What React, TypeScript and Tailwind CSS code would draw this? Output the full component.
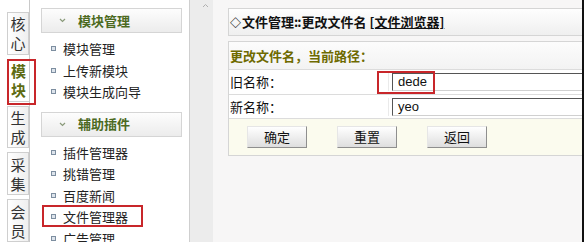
const font = { fontFamily: '"Noto Sans CJK SC", "Noto Sans", sans-serif' };

const tabs = [
  { label: '核心', active: false },
  { label: '模块', active: true },
  { label: '生成', active: false },
  { label: '采集', active: false },
  { label: '会员', active: false },
];

const groups = [
  { title: '模块管理', items: ['模块管理', '上传新模块', '模块生成向导'] },
  { title: '辅助插件', items: ['插件管理器', '挑错管理', '百度新闻', '文件管理器', '广告管理'] },
];

function Tab({ label, active }: { label: string; active: boolean }) {
  return (
    <div
      className={`relative flex h-[43px] w-[22px] flex-col items-center justify-center border border-[#cfcfcf] text-[15px] leading-[19px] ${
        active
          ? 'border-r-0 bg-white font-bold text-[#5d6b12]'
          : 'bg-gradient-to-r from-white to-[#efefef] text-[#333]'
      }`}
    >
      {label.split('').map((c) => (
        <span key={c}>{c}</span>
      ))}
      {active && (
        <div className="absolute left-[-1px] top-[-1px] h-[46px] w-[29px] border-2 border-[#c8262a]" />
      )}
    </div>
  );
}

function Group({ title, items }: { title: string; items: string[] }) {
  return (
    <div className="flex flex-col">
      <div className="flex h-[25px] w-[141px] items-center border border-[#d5d5d5] bg-gradient-to-b from-[#fdfdfd] to-[#ececec]">
        <svg className="ml-[17px]" width="7" height="5" viewBox="0 0 7 5">
          <path d="M1 1l2.5 2.5L6 1" fill="none" stroke="#8a9a7a" strokeWidth="1.2" />
        </svg>
        <span className="ml-[12px] text-[13px] font-bold text-[#4c6a1f]">{title}</span>
      </div>
      <div className="flex flex-col pt-[5px] pb-[9px]">
        {items.map((item) => (
          <div key={item} className="relative flex h-[21.5px] items-center text-[13px] text-[#222]">
            <span className="ml-[10px] mr-[7px] h-[5px] w-[5px] border border-[#7d8ea0] bg-[#dde4ec]" />
            {item}
            {item === '文件管理器' && (
              <div className="absolute left-[1px] top-[-1px] h-[22px] w-[101px] border-2 border-[#c8262a]" />
            )}
          </div>
        ))}
      </div>
    </div>
  );
}

function Button({ label }: { label: string }) {
  return (
    <button className="h-[22px] w-[60px] border border-t-[#e6e6e6] border-l-[#e6e6e6] border-r-[#8e8e8e] border-b-[#8e8e8e] bg-gradient-to-b from-white to-[#dedede] text-[13px] text-[#111]">
      {label}
    </button>
  );
}

export default function App() {
  return (
    <div className="flex h-[242px] w-[584px] overflow-hidden bg-white" style={font}>
      {/* tab strip */}
      <div className="flex w-[30px] shrink-0 flex-col gap-[4px] border-r border-[#c9c9c9] bg-white pl-[7px] pt-[12px]">
        {tabs.map((t) => (
          <Tab key={t.label} {...t} />
        ))}
      </div>

      {/* side menu */}
      <div className="flex w-[159px] shrink-0 flex-col bg-white pl-[11px] pt-[8px]">
        {groups.map((g) => (
          <Group key={g.title} {...g} />
        ))}
      </div>

      {/* splitter */}
      <div className="flex w-[24px] shrink-0 justify-center border-l border-[#cfcfcf] bg-[#ececec]">
        <svg className="mt-[3px] ml-[8px]" width="7" height="5" viewBox="0 0 7 5">
          <path d="M1 4l2.5-2.5L6 4" fill="none" stroke="#b0b0b0" strokeWidth="1" />
        </svg>
      </div>

      {/* main */}
      <div className="flex flex-1 flex-col gap-[5px] bg-[#f7f6f6] pl-[15px] pt-[8px]">
        <div className="flex h-[28px] items-center border border-r-0 border-[#d5d5d5] bg-gradient-to-b from-[#fefefe] to-[#efefef] pl-[1px] text-[13px] font-bold text-[#111]">
          <span className="mr-[1px] text-[11px]">◇</span>文件管理<span className="tracking-[-1px]">::</span>
          <span className="ml-[1px]">更改文件名</span>
          <span className="ml-[3px] underline">[文件浏览器]</span>
        </div>
        <div className="flex flex-col border border-r-0 border-[#d5d5d5] bg-white">
          <div className="flex h-[28px] items-center border-b border-[#dcdcdc] bg-gradient-to-b from-[#fcfcfc] to-[#f3f3f3] pl-[1px] text-[13px] font-bold text-[#6e6a00]">
            更改文件名，当前路径：
          </div>
          <div className="flex h-[25px] items-center border-b border-[#dcdcdc]">
            <div className="w-[159px] pl-[1px] text-[13px] text-[#111]">旧名称：</div>
            <div className="relative flex flex-1 items-center border-l border-[#eaeaea] pl-[3px]">
              <div className="h-[18px] flex-1 border border-t-[#555] border-l-[#555] border-r-0 border-b-[#d0d0d0] pl-[5px] text-[13px] leading-[16px] text-[#111]" style={{ fontFamily: '"Liberation Sans", Arial, sans-serif' }}>
                dede
              </div>
              <div className="absolute left-[-12px] top-[-2px] h-[23px] w-[58px] border-2 border-[#c8262a]" />
            </div>
          </div>
          <div className="flex h-[24px] items-center border-b border-[#dcdcdc]">
            <div className="w-[159px] pl-[1px] text-[13px] text-[#111]">新名称：</div>
            <div className="flex flex-1 items-center border-l border-[#eaeaea] pl-[3px]">
              <div className="h-[18px] flex-1 border border-t-[#555] border-l-[#555] border-r-0 border-b-[#d0d0d0] pl-[5px] text-[13px] leading-[16px] text-[#111]" style={{ fontFamily: '"Liberation Sans", Arial, sans-serif' }}>
                yeo
              </div>
            </div>
          </div>
          <div className="flex h-[36px] items-center gap-[30px] bg-[#fbfbee] pl-[18px]">
            <Button label="确定" />
            <Button label="重置" />
            <Button label="返回" />
          </div>
        </div>
      </div>

      <div className="w-[2px] shrink-0 bg-[#111]" />
    </div>
  );
}
